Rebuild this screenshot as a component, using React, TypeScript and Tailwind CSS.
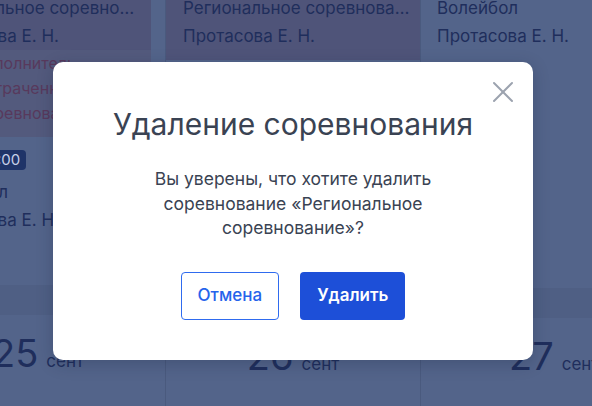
import { X } from "lucide-react";

function Week() {
  return (
    <div className="flex h-full w-[765px] -ml-[89px] text-[17px] leading-[28px] text-[#1f2e5c]">
      {/* column 1 */}
      <div className="flex w-[255px] shrink-0 flex-col border-r border-[#4a5a7e]">
        <div className="mr-[14px] bg-[#4f5479] px-4">
          <div className="-mt-[6px] truncate">Региональное соревнование</div>
          <div>Протасова Е. Н.</div>
        </div>
        <div className="mr-[14px] h-[87px] bg-[#535a7d] pl-[62px] pt-[1px] text-[16px] leading-[25px] text-[#58395c]">
          <div className="whitespace-nowrap">Исполнитель</div>
          <div className="whitespace-nowrap">Потраченное</div>
          <div className="whitespace-nowrap">Соревнование</div>
        </div>
        <div className="h-[148px] px-4 pt-[8px]">
          <span className="-ml-[6px] inline-block rounded-[4px] bg-[#1f3468] px-1.5 text-[15px] leading-[20px] text-[#c6d0e8]">
            10:00 – 12:00
          </span>
          <div className="mt-[5px]">Волейбол</div>
          <div>Протасова Е. Н.</div>
        </div>
        <div className="h-[30px] bg-[#4f5f84]" />
        <div className="flex items-baseline justify-center gap-2 pt-[16px]">
          <span className="text-[38px] leading-[44px]">25</span>
          <span className="text-[17px]">сент</span>
        </div>
      </div>
      {/* column 2 */}
      <div className="flex w-[255px] shrink-0 flex-col border-r border-[#4a5a7e]">
        <div className="h-[60px] bg-[#4f5479] pl-[17px]">
          <div className="-mt-[6px] w-[230px] truncate">Региональное соревнование</div>
          <div>Протасова Е. Н.</div>
        </div>
        <div className="h-[228px]" />
        <div className="h-[30px] bg-[#4f5f84]" />
        <div className="flex items-baseline justify-center gap-2 pt-[16px]">
          <span className="text-[38px] leading-[44px]">26</span>
          <span className="text-[17px]">сент</span>
        </div>
      </div>
      {/* column 3 */}
      <div className="flex w-[255px] shrink-0 flex-col">
        <div className="h-[60px] pl-4">
          <div className="-mt-[6px]">Волейбол</div>
          <div>Протасова Е. Н.</div>
        </div>
        <div className="h-[228px]" />
        <div className="h-[30px] bg-[#4f5f84]" />
        <div className="flex items-baseline gap-2 pl-[88px] pt-[16px]">
          <span className="text-[38px] leading-[44px]">27</span>
          <span className="text-[17px]">сент</span>
        </div>
      </div>
    </div>
  );
}

function DeleteDialog() {
  return (
    <div className="relative h-[298px] w-[480px] rounded-[10px] bg-white px-8 pt-[44px] text-center shadow-[0_4px_16px_rgba(20,30,60,0.25)]">
      <button className="absolute right-[12px] top-[12px] text-[#9ca3af]">
        <X className="h-[36px] w-[36px]" strokeWidth={1.3} />
      </button>
      <h2 className="text-[30px] leading-[36px] font-normal text-[#3a4353]">Удаление соревнования</h2>
      <p className="mx-auto mt-[25px] w-[300px] text-[17.5px] leading-[24.5px] text-[#3a4353]">
        Вы уверены, что хотите удалить соревнование «Региональное соревнование»?
      </p>
      <div className="mt-[31px] flex justify-center gap-[21px]">
        <button className="h-[48px] rounded-[4px] border border-[#2f6bef] px-4 text-[17px] font-medium text-[#2563eb]">
          Отмена
        </button>
        <button className="h-[48px] rounded-[4px] bg-[#1d4fd8] px-[17px] text-[17px] font-semibold text-white">
          Удалить
        </button>
      </div>
    </div>
  );
}

export default function App() {
  return (
    <div className="relative h-[406px] w-[592px] overflow-hidden bg-[#53648a] font-['Inter',sans-serif]">
      <Week />
      <div className="absolute inset-0 flex items-start justify-start pl-[53px] pt-[62px]">
        <DeleteDialog />
      </div>
    </div>
  );
}
